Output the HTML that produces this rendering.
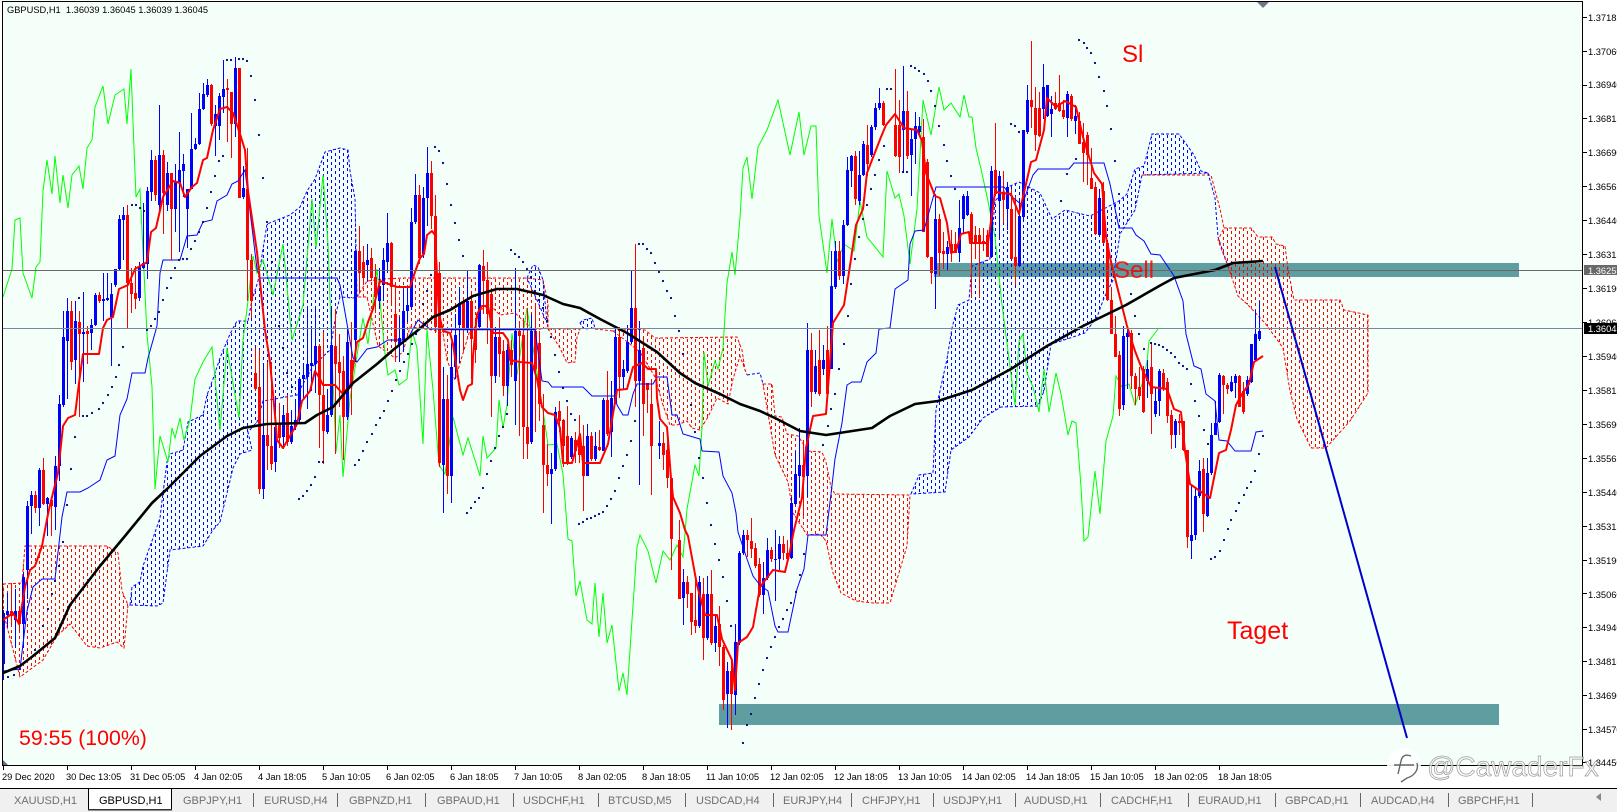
<!DOCTYPE html>
<html><head><meta charset="utf-8"><title>GBPUSD,H1</title>
<style>
html,body{margin:0;padding:0;background:#fff;width:1617px;height:812px;overflow:hidden}
svg{display:block;position:absolute;left:0;top:0}
text{font-family:"Liberation Sans",sans-serif}
.p{font-size:9.3px;fill:#000}
.d{font-size:9.3px;fill:#000}
.t{font-size:11px;fill:#6e6e6e}
.a{font-size:24px;fill:#f00}
</style></head><body>
<svg width="1617" height="812" viewBox="0 0 1617 812">
<defs>
<pattern id="pr" width="8" height="6" patternUnits="userSpaceOnUse"><rect x="3" y="0" width="1" height="3" fill="#f00"/><rect x="7" y="3" width="1" height="3" fill="#f00"/></pattern>
<pattern id="pb" width="8" height="6" patternUnits="userSpaceOnUse"><rect x="3" y="0" width="1" height="3" fill="#00f"/><rect x="7" y="3" width="1" height="3" fill="#00f"/></pattern>
<clipPath id="c"><rect x="3" y="2" width="1580" height="763"/></clipPath>
</defs>
<rect width="1617" height="812" fill="#fff"/>
<rect x="2" y="1" width="1581" height="765" fill="#F5FFFA"/>

<g clip-path="url(#c)">
<!-- bands -->
<rect x="934" y="263" width="585" height="14" fill="#5F9EA0"/>
<rect x="719" y="704" width="780" height="21" fill="#5F9EA0"/>

<!-- clouds -->
<g stroke-width="1" stroke-dasharray="3 2">
<polygon fill="url(#pr)" stroke="#f00" points="3,584 22,583 25,546 107,546 118,553 122,591 128,605 124,648 117,642 100,648 87,646 70,624 57,636 43,660 20,677 3,611"/>
<polygon fill="url(#pb)" stroke="#00f" points="130,605 132,587 140,582 143,566 153,538 160,518 162,501 167,462 170,454 183,450 188,422 203,415 207,395 213,379 220,358 230,334 237,321 248,321 252,300 258,281 267,224 290,215 300,207 307,191 315,179 325,152 340,148 348,150 350,171 355,199 357,297 353,298 340,297 337,309 330,350 313,366 297,395 263,401 257,422 248,432 252,450 240,454 233,468 228,489 220,522 213,530 203,546 187,548 170,550 163,603 157,606"/>
<polygon fill="url(#pr)" stroke="#f00" points="357,297 367,281 383,279 403,278 527,278 543,280 548,303 548,328 533,330 515,313 500,315 490,305 480,310 475,327 470,330 455,380 447,360 443,333 433,330 410,327 403,352 395,358 378,346 367,297"/>
<polygon fill="url(#pb)" stroke="#00f" points="527,278 533,265 538,267 543,280 547,323 537,300"/>
<polygon fill="url(#pr)" stroke="#f00" points="548,329 580,329 577,337 575,362 567,363 560,348"/>
<polygon fill="url(#pb)" stroke="#00f" points="580,323 583,320 592,318 595,328 584,329"/>
<polyline fill="none" stroke="#f00" points="595,329 613,331"/>
<polygon fill="url(#pr)" stroke="#f00" points="613,331 633,329 645,330 655,338 737,337 742,350 745,370 747,375 740,356 733,379 728,404 717,398 708,417 700,430 692,428 687,421 677,425 670,425 663,405 655,377 640,352 625,340"/>
<polyline fill="none" stroke="#00f" points="747,375 753,374 760,373 763,384"/>
<polygon fill="url(#pr)" stroke="#f00" points="763,384 772,384 775,416 782,417 787,434 798,436 808,451 822,452 826,462 831,487 835,494 910,495 907,546 890,603 873,603 856,601 841,593 833,573 826,541 820,534 807,535 793,513 788,482 775,455"/>
<polygon fill="url(#pb)" stroke="#00f" points="911,494 919,475 933,473 936,409 947,359 952,328 958,305 969,300 972,266 990,259 995,201 1008,187 1019,182 1040,193 1052,219 1065,210 1090,216 1119,201 1127,194 1135,169 1144,166 1152,134 1165,134 1179,134 1194,155 1201,171 1208,173 1142,175 1135,210 1120,234 1113,280 1104,298 1097,317 1085,333 1061,341 1051,344 1044,391 1038,406 1001,407 983,418 969,437 951,450 945,492"/>
<polyline fill="none" stroke="#f00" points="1142,175 1211,175 1220,209 1224,228"/>
<polyline fill="none" stroke="#00f" points="1208,173 1215,198 1218,237 1229,269"/>
<polygon fill="url(#pr)" stroke="#f00" points="1224,228 1251,228 1258,237 1272,237 1276,244 1285,246 1288,269 1294,300 1340,300 1344,310 1368,315 1368,393 1350,421 1326,448 1311,448 1297,419 1290,391 1283,348 1265,323 1247,304 1238,296 1229,269 1218,240"/>
</g>

<!-- chikou -->
<polyline fill="none" stroke="#00ff00" stroke-width="1" points="3,297 12,269 15,220 20,218 23,273 32,298 36,267 40,262 43,191 47,160 52,194 55,156 60,203 63,175 68,208 72,175 79,166 83,189 87,148 92,140 95,107 103,86 108,124 115,95 124,89 127,124 131,69 134,148 136,197 140,189 147,334 152,387 155,489 160,436 168,462 172,428 175,438 180,418 184,440 190,420 195,379 203,362 212,347 220,430 227,348 239,418 243,340 248,301 253,256 257,273 263,260 273,295 283,244 292,340 303,305 312,199 316,248 323,175 328,244 333,381 336,452 340,415 343,477 350,399 363,318 368,344 377,269 385,354 388,375 395,370 399,385 407,379 412,331 417,348 423,444 427,329 433,390 439,465 445,474 453,417 463,455 468,438 480,476 483,436 487,458 496,448 499,400 503,428 507,405 512,333 517,375 527,308 535,360 542,404 548,445 557,444 563,474 568,539 572,541 576,596 580,581 587,620 592,624 595,583 599,637 603,593 607,643 612,625 619,691 623,673 627,695 632,620 637,547 640,535 648,551 656,583 663,551 670,560 677,545 683,557 687,509 695,465 699,476 702,427 704,352 708,386 715,361 718,369 723,348 727,283 732,252 735,275 740,218 743,168 747,157 752,199 758,147 767,130 778,100 790,155 799,112 804,155 811,126 816,126 819,216 827,273 832,219 837,262 844,244 854,251 860,201 867,237 883,257 887,171 895,198 899,194 904,216 910,264 917,209 923,100 931,135 939,87 944,110 951,103 960,117 964,95 969,117 972,117 976,148 981,169 988,201 995,237 1002,305 1015,405 1019,341 1023,334 1027,373 1033,387 1039,412 1044,369 1049,412 1056,373 1061,394 1068,435 1072,421 1076,423 1081,487 1084,541 1088,537 1095,471 1100,514 1106,441 1113,416 1116,376 1122,387 1129,384 1135,405 1142,384 1147,362 1149,341 1158,329"/>

<!-- wicks and bodies -->
<g shape-rendering="crispEdges" fill="none">
<path stroke="#0000ff" stroke-width="1" d="M3.5 610V680M7.5 593V627M15.5 589V648M23.5 572V648M27.5 501V599M31.5 491V534M39.5 468V526M47.5 497V536M55.5 456V530M59.5 395V481M63.5 311V407M67.5 298V399M75.5 301V384M83.5 292V382M91.5 319V350M95.5 293V326M103.5 273V321M107.5 273V301M111.5 283V366M115.5 269V287M119.5 215V271M123.5 207V260M139.5 262V301M143.5 203V269M147.5 187V279M151.5 150V201M159.5 105V211M167.5 162V211M175.5 164V232M179.5 132V252M183.5 154V197M187.5 189V248M191.5 113V189M195.5 138V150M199.5 93V145M203.5 83V110M207.5 79V97M215.5 105V156M219.5 93V140M223.5 60V113M235.5 57V137M243.5 166V199M263.5 366V499M275.5 399V472M283.5 405V449M291.5 410V444M295.5 399V430M299.5 377V422M303.5 364V399M307.5 307V409M311.5 326V391M315.5 307V393M327.5 389V434M331.5 309V417M347.5 328V420M355.5 250V362M367.5 244V281M379.5 268V309M383.5 248V301M387.5 213V273M399.5 317V362M403.5 289V352M407.5 287V322M411.5 208V310M415.5 174V224M423.5 187V258M427.5 147V226M443.5 367V513M451.5 344V503M455.5 314V379M459.5 287V363M467.5 270V333M479.5 264V329M495.5 327V383M507.5 344V406M515.5 268V425M531.5 314V444M551.5 453V524M555.5 407V471M571.5 436V459M587.5 424V476M595.5 432V461M603.5 398V451M611.5 381V457M615.5 327V404M623.5 360V390M627.5 325V373M631.5 270V344M639.5 321V485M659.5 421V459M683.5 569V625M699.5 576V628M707.5 576V640M715.5 614V652M727.5 662V728M735.5 624V715M739.5 551V645M743.5 530V555M763.5 562V614M767.5 538V580M775.5 530V601M779.5 536V570M791.5 497V559M795.5 451V505M799.5 428V497M807.5 323V497M815.5 350V394M823.5 345V375M831.5 251V369M835.5 241V289M843.5 220V284M847.5 157V226M851.5 155V187M859.5 151V205M863.5 141V176M871.5 125V157M875.5 103V130M879.5 88V110M903.5 66V173M911.5 130V196M915.5 112V164M919.5 117V134M935.5 194V309M947.5 241V271M959.5 200V262M963.5 194V234M967.5 191V216M991.5 166V258M999.5 171V237M1007.5 182V230M1019.5 198V267M1023.5 130V219M1027.5 85V134M1043.5 64V119M1047.5 85V117M1051.5 96V137M1067.5 91V137M1075.5 105V134M1099.5 189V237M1123.5 326V410M1127.5 326V389M1147.5 360V398M1155.5 387V417M1159.5 369V416M1175.5 419V448M1191.5 485V559M1195.5 487V540M1199.5 460V498M1207.5 458V517M1211.5 423V475M1215.5 401V435M1219.5 373V423M1231.5 376V392M1235.5 374V398M1247.5 376V396M1251.5 344V383M1255.5 310V362M1259.5 301V341"/>
<path stroke="#0000ff" stroke-width="3" d="M3.5 613V664M7.5 611V615M15.5 611V620M23.5 577V624M27.5 506V570M31.5 495V506M39.5 470V508M47.5 498V504M55.5 466V507M59.5 404V466M63.5 337V405M67.5 311V341M75.5 321V360M83.5 332V334M91.5 325V333M95.5 295V325M103.5 299V301M107.5 298V300M111.5 294V317M115.5 269V285M119.5 219V269M123.5 215V220M139.5 266V298M143.5 263V268M147.5 191V264M151.5 160V192M159.5 155V205M167.5 173V205M175.5 181V209M179.5 170V183M183.5 164V171M187.5 189V209M191.5 149V189M195.5 144V149M199.5 109V144M203.5 94V109M207.5 85V95M215.5 114V126M219.5 96V126M223.5 89V97M235.5 68V124M243.5 188V197M263.5 435V489M275.5 427V462M283.5 415V437M291.5 426V442M295.5 420V427M299.5 379V420M303.5 375V379M307.5 364V377M311.5 363V366M315.5 346V364M327.5 415V432M331.5 345V415M347.5 342V417M355.5 251V340M367.5 260V265M379.5 286V301M383.5 260V285M387.5 243V262M399.5 338V344M403.5 311V340M407.5 305V311M411.5 222V307M415.5 195V222M423.5 198V254M427.5 173V198M443.5 399V465M451.5 367V476M455.5 335V367M459.5 303V325M467.5 301V330M479.5 265V327M495.5 337V376M507.5 350V386M515.5 331V381M531.5 331V442M551.5 469V474M555.5 412V469M571.5 438V457M587.5 436V476M595.5 446V459M603.5 400V451M611.5 398V432M615.5 337V402M623.5 369V377M627.5 342V371M631.5 308V342M639.5 350V381M659.5 443V446M683.5 582V598M699.5 582V626M707.5 594V638M715.5 626V643M727.5 671V694M735.5 642V695M739.5 553V643M743.5 535V553M763.5 578V595M767.5 550V578M775.5 559V560M779.5 544V559M791.5 503V558M795.5 474V504M799.5 465V476M807.5 350V476M815.5 366V392M823.5 360V369M831.5 286V369M835.5 251V287M843.5 225V276M847.5 170V225M851.5 156V171M859.5 175V201M863.5 144V175M871.5 127V155M875.5 108V127M879.5 103V108M903.5 111V130M911.5 139V155M915.5 126V139M919.5 126V132M935.5 219V274M947.5 247V254M959.5 228V253M963.5 196V219M967.5 196V215M991.5 171V257M999.5 176V201M1007.5 187V209M1019.5 216V266M1023.5 130V217M1027.5 100V132M1043.5 87V109M1047.5 85V116M1051.5 109V114M1067.5 94V118M1075.5 116V121M1099.5 198V235M1123.5 336V405M1127.5 333V337M1147.5 369V381M1155.5 401V414M1159.5 371V401M1175.5 421V435M1191.5 535V541M1195.5 496V535M1199.5 471V496M1207.5 473V516M1211.5 435V473M1215.5 423V435M1219.5 375V422M1231.5 382V391M1235.5 376V383M1247.5 380V394M1251.5 344V382M1255.5 334V360M1259.5 331V339"/>
<path stroke="#ff0000" stroke-width="1" d="M11.5 583V627M19.5 609V632M35.5 491V513M43.5 458V505M51.5 499V536M71.5 301V370M79.5 311V417M87.5 326V364M99.5 292V303M127.5 205V329M131.5 268V313M135.5 266V309M155.5 156V201M163.5 150V234M171.5 173V260M211.5 84V126M227.5 79V142M231.5 92V158M239.5 68V198M247.5 148V301M251.5 254V318M255.5 348V391M259.5 350V494M267.5 362V470M271.5 362V470M279.5 403V448M287.5 395V446M319.5 344V448M323.5 332V464M335.5 309V454M339.5 334V407M343.5 356V460M351.5 322V415M359.5 226V293M363.5 246V285M371.5 248V281M375.5 264V313M391.5 242V305M395.5 285V362M419.5 185V264M431.5 161V229M435.5 195V333M439.5 262V467M447.5 375V494M463.5 298V351M471.5 291V379M475.5 320V363M483.5 250V314M487.5 262V344M491.5 290V417M499.5 317V377M503.5 340V396M511.5 340V377M519.5 321V436M523.5 321V459M527.5 308V459M535.5 306V432M539.5 331V421M543.5 394V513M547.5 444V486M559.5 401V432M563.5 419V467M567.5 406V465M575.5 432V463M579.5 415V463M583.5 425V511M591.5 432V461M599.5 430V451M607.5 371V436M619.5 327V398M635.5 244V407M643.5 337V436M647.5 383V413M651.5 379V495M663.5 432V470M667.5 436V488M671.5 478V570M679.5 520V599M687.5 576V608M691.5 593V635M695.5 580V633M703.5 578V660M711.5 570V645M719.5 606V666M723.5 645V710M731.5 660V730M747.5 530V557M751.5 518V558M755.5 543V568M759.5 558V597M771.5 547V562M783.5 536V560M787.5 540V560M803.5 440V516M811.5 333V407M819.5 330V396M827.5 326V394M839.5 241V280M855.5 151V205M867.5 125V176M883.5 101V126M895.5 69V157M899.5 100V173M907.5 91V159M923.5 119V232M927.5 159V258M931.5 257V284M939.5 214V276M943.5 232V269M951.5 230V262M955.5 232V253M971.5 212V298M975.5 226V259M979.5 228V298M983.5 228V251M987.5 230V257M995.5 123V196M1003.5 171V223M1011.5 189V259M1015.5 196V285M1031.5 41V128M1035.5 87V151M1039.5 92V137M1055.5 92V110M1059.5 75V112M1063.5 100V119M1071.5 94V121M1079.5 112V144M1083.5 123V182M1087.5 132V185M1091.5 148V189M1095.5 182V235M1103.5 182V244M1107.5 241V301M1111.5 287V334M1115.5 316V357M1119.5 351V416M1131.5 330V389M1135.5 373V405M1139.5 367V400M1143.5 366V413M1151.5 342V434M1163.5 369V391M1167.5 378V423M1171.5 410V449M1179.5 414V435M1183.5 421V451M1187.5 450V548M1203.5 458V532M1223.5 375V414M1227.5 383V394M1239.5 375V407M1243.5 382V414"/>
<path stroke="#ff0000" stroke-width="3" d="M11.5 611V616M19.5 611V624M35.5 495V508M43.5 470V504M51.5 500V506M71.5 311V362M79.5 322V334M87.5 331V334M99.5 295V301M127.5 215V283M131.5 283V294M135.5 293V299M155.5 160V195M163.5 155V193M171.5 173V209M211.5 85V124M227.5 88V90M231.5 92V124M239.5 68V198M247.5 189V260M251.5 260V301M255.5 373V389M259.5 387V489M267.5 435V446M271.5 446V464M279.5 424V438M287.5 413V442M319.5 346V395M323.5 395V431M335.5 346V364M339.5 362V373M343.5 371V417M351.5 360V386M359.5 251V273M363.5 262V278M371.5 258V278M375.5 277V297M391.5 243V287M395.5 314V342M419.5 195V258M431.5 173V216M435.5 216V327M439.5 273V463M447.5 399V476M463.5 302V330M471.5 301V339M475.5 329V350M483.5 266V281M487.5 280V314M491.5 294V376M499.5 337V354M503.5 351V386M511.5 350V365M519.5 331V336M523.5 335V427M527.5 427V444M535.5 331V369M539.5 343V404M543.5 425V465M547.5 465V474M559.5 411V421M563.5 420V446M567.5 436V463M575.5 440V451M579.5 440V455M583.5 446V476M591.5 436V459M599.5 447V450M607.5 400V434M619.5 337V377M635.5 308V381M643.5 348V404M647.5 383V390M651.5 404V446M663.5 443V455M667.5 450V478M671.5 478V539M679.5 540V599M687.5 582V594M691.5 593V622M695.5 620V626M703.5 594V638M711.5 594V643M719.5 624V647M723.5 647V700M731.5 671V694M747.5 535V540M751.5 541V549M755.5 548V566M759.5 564V595M771.5 550V559M783.5 544V553M787.5 553V559M803.5 465V477M811.5 350V392M819.5 360V394M827.5 350V394M839.5 251V276M855.5 156V199M867.5 145V164M883.5 103V125M895.5 125V156M899.5 125V157M907.5 111V156M923.5 137V232M927.5 162V257M931.5 257V273M939.5 219V253M943.5 251V254M951.5 244V253M955.5 244V253M971.5 214V244M975.5 235V244M979.5 235V244M983.5 241V244M987.5 235V257M995.5 170V194M1003.5 192V200M1011.5 209V259M1015.5 257V266M1031.5 100V107M1035.5 108V135M1039.5 108V136M1055.5 103V109M1059.5 103V111M1063.5 110V117M1071.5 96V119M1079.5 121V144M1083.5 142V153M1087.5 135V155M1091.5 178V189M1095.5 187V234M1103.5 191V243M1107.5 243V300M1111.5 300V334M1115.5 334V357M1119.5 355V409M1131.5 333V376M1135.5 376V389M1139.5 387V396M1143.5 369V412M1151.5 367V394M1163.5 373V389M1167.5 382V416M1171.5 415V435M1179.5 421V423M1183.5 421V450M1187.5 450V537M1203.5 469V514M1223.5 376V385M1227.5 385V389M1239.5 376V407M1243.5 391V412"/>
</g>

<!-- kijun -->
<polyline fill="none" stroke="#0000ff" stroke-width="1" points="3,671 20,669 27,611 33,587 42,579 55,579 62,517 67,492 80,492 88,488 100,480 107,460 115,456 120,415 127,399 132,373 145,373 148,358 157,326 160,273 163,260 180,260 187,236 197,235 203,222 212,220 217,201 227,195 232,184 238,181 245,170 257,269 260,278 337,278 340,285 343,301 353,358 357,362 367,349 377,347 388,340 407,340 418,320 430,329 535,329 542,381 548,382 552,387 583,387 592,396 615,396 617,405 623,415 628,415 633,394 637,384 653,384 657,377 667,377 672,415 677,415 683,434 700,439 702,451 719,452 723,476 732,493 736,513 738,532 747,559 753,576 760,585 768,591 775,626 778,632 788,632 797,589 804,569 808,535 826,535 831,494 835,459 842,423 847,385 852,382 861,382 867,362 876,353 879,329 890,328 895,289 908,280 910,244 915,231 924,230 936,187 1004,187 1011,196 1022,205 1033,175 1038,169 1069,169 1074,163 1104,163 1110,184 1119,228 1132,228 1136,235 1144,241 1151,254 1160,255 1174,276 1183,301 1186,334 1194,366 1201,369 1206,394 1215,401 1219,440 1227,441 1235,451 1251,451 1256,432 1263,431"/>
<line x1="443" y1="329.5" x2="535" y2="329.5" stroke="#0000ff" stroke-width="1.5"/>

<!-- tenkan -->
<polyline fill="none" stroke="#ff0000" stroke-width="2" stroke-linejoin="round" points="3,620 13,613 19,624 25,587 30,570 35,566 42,546 47,519 50,505 58,473 63,426 68,418 75,415 79,383 83,354 99,354 103,328 107,320 113,317 119,289 128,285 135,269 147,262 151,232 156,228 163,197 173,181 180,183 185,197 192,187 197,183 203,160 207,158 213,130 220,109 227,107 233,113 240,134 245,150 248,191 257,252 262,301 265,330 270,362 275,415 277,440 283,448 297,424 302,401 310,391 315,371 320,379 323,385 335,385 342,393 350,387 357,342 363,338 368,322 373,309 380,281 397,287 410,287 415,272 420,258 424,254 427,235 432,231 435,235 439,314 443,331 450,333 453,344 457,371 460,390 463,400 468,386 472,384 473,356 477,314 482,306 488,306 493,333 503,333 508,340 510,360 520,362 532,363 537,379 542,407 548,413 555,415 560,428 563,463 572,463 580,434 583,463 600,463 608,444 617,390 627,389 633,367 642,363 648,369 656,369 657,398 660,419 667,427 671,478 673,497 680,513 685,530 688,536 697,585 705,615 717,615 722,639 732,660 735,690 738,643 747,637 753,627 760,587 773,570 785,572 790,551 794,530 802,498 806,448 813,416 826,414 833,323 844,305 851,259 856,225 863,209 867,173 872,160 881,137 886,125 895,114 904,128 917,130 922,141 926,173 935,196 940,198 947,223 951,253 956,251 961,234 969,232 970,243 988,243 995,192 1011,194 1019,214 1026,184 1031,162 1036,160 1044,130 1047,98 1056,107 1065,101 1076,107 1083,137 1094,173 1102,184 1106,237 1111,262 1119,294 1127,326 1135,351 1142,369 1151,387 1167,389 1174,409 1181,412 1185,451 1190,484 1197,489 1204,494 1210,498 1215,473 1219,453 1226,450 1231,430 1236,405 1242,394 1249,384 1254,362 1263,356"/>

<!-- parabolic sar -->
<path fill="none" stroke="#000080" stroke-width="2.2" stroke-linecap="round" d="M8 677h.01M14 675h.01M20 669h.01M35 650h.01M43 626h.01M48 609h.01M52 594h.01M55 581h.01M59 566h.01M63 542h.01M67 505h.01M71 469h.01M75 437h.01M83 416h.01M87 416h.01M92 413h.01M99 409h.01M103 403h.01M108 395h.01M112 387h.01M116 377h.01M119 365h.01M123 347h.01M79 298h.01M132 205h.01M136 205h.01M140 208h.01M144 211h.01M147 330h.01M151 326h.01M155 319h.01M159 312h.01M163 300h.01M167 288h.01M171 278h.01M175 268h.01M179 260h.01M183 259h.01M187 259h.01M191 249h.01M195 241h.01M199 232h.01M203 222h.01M207 208h.01M211 192h.01M215 176h.01M219 161h.01M223 156h.01M227 60h.01M231 60h.01M239 59h.01M243 59h.01M247 61h.01M251 76h.01M255 100h.01M259 135h.01M263 178h.01M267 222h.01M272 262h.01M279 326h.01M283 348h.01M287 373h.01M292 387h.01M299 499h.01M303 496h.01M307 491h.01M311 485h.01M315 477h.01M319 462h.01M323 462h.01M355 465h.01M359 460h.01M363 451h.01M367 442h.01M372 434h.01M376 425h.01M380 418h.01M384 411h.01M388 401h.01M392 391h.01M396 380h.01M400 371h.01M404 362h.01M408 354h.01M412 344h.01M416 334h.01M423 304h.01M427 291h.01M431 275h.01M435 147h.01M439 151h.01M443 163h.01M447 184h.01M451 205h.01M455 223h.01M459 240h.01M463 256h.01M467 513h.01M471 508h.01M475 502h.01M479 498h.01M483 488h.01M487 474h.01M491 461h.01M495 448h.01M499 436h.01M503 427h.01M507 414h.01M511 250h.01M515 254h.01M519 257h.01M523 262h.01M527 269h.01M531 277h.01M535 291h.01M539 300h.01M543 308h.01M547 321h.01M551 337h.01M555 355h.01M559 372h.01M563 388h.01M567 401h.01M571 414h.01M575 420h.01M579 524h.01M583 522h.01M587 519h.01M591 518h.01M595 516h.01M599 514h.01M603 512h.01M607 506h.01M611 499h.01M615 491h.01M619 478h.01M623 466h.01M627 455h.01M631 441h.01M635 421h.01M639 244h.01M643 244h.01M647 249h.01M651 253h.01M655 263h.01M659 272h.01M663 281h.01M667 291h.01M671 298h.01M675 316h.01M679 331h.01M683 354h.01M691 405h.01M695 432h.01M699 458h.01M703 478h.01M707 503h.01M711 525h.01M715 544h.01M719 560h.01M723 577h.01M727 601h.01M731 626h.01M743 743h.01M747 725h.01M751 714h.01M755 698h.01M759 684h.01M763 670h.01M767 658h.01M771 647h.01M775 637h.01M779 627h.01M783 619h.01M787 610h.01M791 603h.01M796 592h.01M800 575h.01M804 554h.01M823 445h.01M828 426h.01M831 409h.01M835 394h.01M839 369h.01M844 344h.01M848 316h.01M851 284h.01M855 259h.01M859 237h.01M863 219h.01M867 205h.01M871 189h.01M875 175h.01M879 160h.01M884 146h.01M887 89h.01M891 89h.01M903 172h.01M907 172h.01M911 66h.01M915 68h.01M919 71h.01M924 74h.01M928 81h.01M931 91h.01M935 106h.01M939 126h.01M944 145h.01M947 161h.01M951 176h.01M955 189h.01M1011 124h.01M1015 126h.01M1019 132h.01M1061 201h.01M1067 174h.01M1076 159h.01M1079 40h.01M1084 43h.01M1087 48h.01M1091 53h.01M1095 63h.01M1099 77h.01M1104 91h.01M1107 106h.01M1111 129h.01M1115 161h.01M1119 194h.01M1131 294h.01M1135 316h.01M1139 334h.01M1144 349h.01M1151 343h.01M1155 344h.01M1159 345h.01M1163 347h.01M1167 350h.01M1171 353h.01M1175 357h.01M1179 363h.01M1183 366h.01M1187 369h.01M1191 384h.01M1195 401h.01M1199 416h.01M1204 430h.01M1208 444h.01M1211 559h.01M1215 557h.01M1220 551h.01M1224 540h.01M1228 529h.01M1231 520h.01M1236 511h.01M1239 503h.01M1244 495h.01M1247 488h.01M1251 482h.01M1255 471h.01M1259 454h.01M1263 436h.01"/>

<!-- black MA -->
<polyline fill="none" stroke="#000" stroke-width="2.6" stroke-linejoin="round" points="3,673 20,666 33,656 55,638 70,605 100,566 125,536 152,503 167,489 200,456 227,436 243,428 267,424 305,423 317,415 333,407 353,383 377,364 393,350 417,331 433,317 450,310 473,296 497,289 517,289 543,295 563,304 580,308 600,319 627,333 657,352 680,373 695,383 720,394 740,404 760,411 777,419 800,431 826,435 872,428 890,416 915,404 938,401 972,390 1011,369 1047,346 1083,326 1126,305 1161,285 1174,278 1215,270 1233,263 1263,261"/>

<!-- h lines -->
<line x1="2" y1="270.5" x2="1583" y2="270.5" stroke="#696969" stroke-width="1"/>
<line x1="2" y1="328.5" x2="1583" y2="328.5" stroke="#778899" stroke-width="1"/>

<!-- trend -->
<line x1="1275" y1="267" x2="1407" y2="738" stroke="#0000cd" stroke-width="2"/>

<!-- labels -->
<text class="a" x="1122" y="62">Sl</text>
<text class="a" x="1114" y="278" opacity=".85">Sell</text>
<text x="1227" y="639" style="font-size:25px;fill:#f00">Taget</text>
<text x="19" y="745" style="font-size:21.3px;fill:#f00">59:55 (100%)</text>
</g>

<text x="7" y="13" style="font-size:9.3px;fill:#000;white-space:pre" xml:space="preserve">GBPUSD,H1  1.36039 1.36045 1.36039 1.36045</text>

<!-- frame -->
<g shape-rendering="crispEdges">
<rect x="0" y="0" width="1617" height="1" fill="#fff"/>
<rect x="2" y="1" width="1581" height="1" fill="#000"/>
<rect x="2" y="1" width="1" height="765" fill="#000"/>
<rect x="1582" y="1" width="1" height="765" fill="#000"/>
<rect x="2" y="765" width="1581" height="1" fill="#000"/>
</g>
<polygon points="1257,2 1269,2 1263,8" fill="#6a7a8a"/>
<polygon points="3,765 3,760 8,765" fill="#5f6f7f"/>

<!-- price axis -->
<path stroke="#000" stroke-width="1" shape-rendering="crispEdges" d="M1583 17.5h4M1583 51.5h4M1583 85.5h4M1583 118.5h4M1583 152.5h4M1583 186.5h4M1583 220.5h4M1583 254.5h4M1583 288.5h4M1583 322.5h4M1583 356.5h4M1583 390.5h4M1583 424.5h4M1583 458.5h4M1583 492.5h4M1583 526.5h4M1583 560.5h4M1583 593.5h4M1583 627.5h4M1583 661.5h4M1583 695.5h4M1583 729.5h4M1583 762.5h4"/>
<g class="p">
<text class="p" x="1588" y="21">1.37185</text>
<text class="p" x="1588" y="55">1.37060</text>
<text class="p" x="1588" y="88">1.36940</text>
<text class="p" x="1588" y="122">1.36815</text>
<text class="p" x="1588" y="156">1.36690</text>
<text class="p" x="1588" y="190">1.36565</text>
<text class="p" x="1588" y="224">1.36440</text>
<text class="p" x="1588" y="258">1.36315</text>
<text class="p" x="1588" y="292">1.36190</text>
<text class="p" x="1588" y="326">1.36060</text>
<text class="p" x="1588" y="360">1.35940</text>
<text class="p" x="1588" y="394">1.35815</text>
<text class="p" x="1588" y="428">1.35690</text>
<text class="p" x="1588" y="462">1.35565</text>
<text class="p" x="1588" y="496">1.35440</text>
<text class="p" x="1588" y="530">1.35315</text>
<text class="p" x="1588" y="564">1.35190</text>
<text class="p" x="1588" y="598">1.35060</text>
<text class="p" x="1588" y="631">1.34940</text>
<text class="p" x="1588" y="665">1.34815</text>
<text class="p" x="1588" y="699">1.34690</text>
<text class="p" x="1588" y="733">1.34570</text>
<text class="p" x="1588" y="766">1.34450</text>
</g>
<rect x="1584" y="265" width="33" height="10" fill="#696969"/>
<text x="1588" y="274" style="font-size:9.3px;fill:#fff">1.36255</text>
<rect x="1584" y="323" width="33" height="11" fill="#000"/>
<text x="1588" y="332" style="font-size:9.3px;fill:#fff">1.36045</text>

<!-- time axis -->
<path stroke="#000" stroke-width="1" shape-rendering="crispEdges" d="M3.5 766v4M67.5 766v4M131.5 766v4M195.5 766v4M259.5 766v4M323.5 766v4M387.5 766v4M451.5 766v4M515.5 766v4M579.5 766v4M643.5 766v4M707.5 766v4M771.5 766v4M835.5 766v4M899.5 766v4M963.5 766v4M1027.5 766v4M1091.5 766v4M1155.5 766v4M1219.5 766v4"/>
<text class="d" x="2" y="780">29 Dec 2020</text>
<text class="d" x="66" y="780">30 Dec 13:05</text>
<text class="d" x="130" y="780">31 Dec 05:05</text>
<text class="d" x="194" y="780">4 Jan 02:05</text>
<text class="d" x="258" y="780">4 Jan 18:05</text>
<text class="d" x="322" y="780">5 Jan 10:05</text>
<text class="d" x="386" y="780">6 Jan 02:05</text>
<text class="d" x="450" y="780">6 Jan 18:05</text>
<text class="d" x="514" y="780">7 Jan 10:05</text>
<text class="d" x="578" y="780">8 Jan 02:05</text>
<text class="d" x="642" y="780">8 Jan 18:05</text>
<text class="d" x="706" y="780">11 Jan 10:05</text>
<text class="d" x="770" y="780">12 Jan 02:05</text>
<text class="d" x="834" y="780">12 Jan 18:05</text>
<text class="d" x="898" y="780">13 Jan 10:05</text>
<text class="d" x="962" y="780">14 Jan 02:05</text>
<text class="d" x="1026" y="780">14 Jan 18:05</text>
<text class="d" x="1090" y="780">15 Jan 10:05</text>
<text class="d" x="1154" y="780">18 Jan 02:05</text>
<text class="d" x="1218" y="780">18 Jan 18:05</text>

<!-- watermark -->
<circle cx="1404" cy="765" r="17" fill="#fff" opacity=".9"/>
<path d="M1411 756c-6-2-9 0-10 5l-3 13M1394 765h20M1417 763c2 7-3 13-10 15l-6 4" fill="none" stroke="#666" stroke-width="1.4"/>
<text x="1427" y="776" style="font-size:28px;fill:#fff;fill-opacity:.65;stroke:#999;stroke-width:.7">@CawaderFx</text>

<!-- tab bar -->
<g shape-rendering="crispEdges">
<rect x="0" y="789" width="1617" height="23" fill="#f0f0f0"/>
<rect x="0" y="788" width="1617" height="1" fill="#000"/>
<rect x="88" y="789" width="84" height="20" fill="#fff"/>
<path d="M88.5 789V810M171.5 789V810" stroke="#000"/>
<rect x="88" y="809" width="84" height="1.5" fill="#333"/>
<path stroke="#666" d="M253.5 793v14M337.5 793v14M425.5 793v14M513.5 793v14M598.5 793v14M685.5 793v14M773.5 793v14M851.5 793v14M933.5 793v14M1015.5 793v14M1100.5 793v14M1188.5 793v14M1275.5 793v14M1360.5 793v14M1448.5 793v14M1532.5 793v14"/>
</g>
<text class="t" x="14" y="804">XAUUSD,H1</text>
<text class="t" x="99" y="804" style="fill:#000">GBPUSD,H1</text>
<text class="t" x="183" y="804">GBPJPY,H1</text>
<text class="t" x="264" y="804">EURUSD,H4</text>
<text class="t" x="349" y="804">GBPNZD,H1</text>
<text class="t" x="437" y="804">GBPAUD,H1</text>
<text class="t" x="523" y="804">USDCHF,H1</text>
<text class="t" x="608" y="804">BTCUSD,M5</text>
<text class="t" x="696" y="804">USDCAD,H4</text>
<text class="t" x="783" y="804">EURJPY,H4</text>
<text class="t" x="862" y="804">CHFJPY,H1</text>
<text class="t" x="943" y="804">USDJPY,H1</text>
<text class="t" x="1024" y="804">AUDUSD,H1</text>
<text class="t" x="1111" y="804">CADCHF,H1</text>
<text class="t" x="1198" y="804">EURAUD,H1</text>
<text class="t" x="1285" y="804">GBPCAD,H1</text>
<text class="t" x="1371" y="804">AUDCAD,H4</text>
<text class="t" x="1458" y="804">GBPCHF,H1</text>
<polygon points="1596,797 1601,793 1601,801" fill="#888"/>
</svg>
</body></html>
